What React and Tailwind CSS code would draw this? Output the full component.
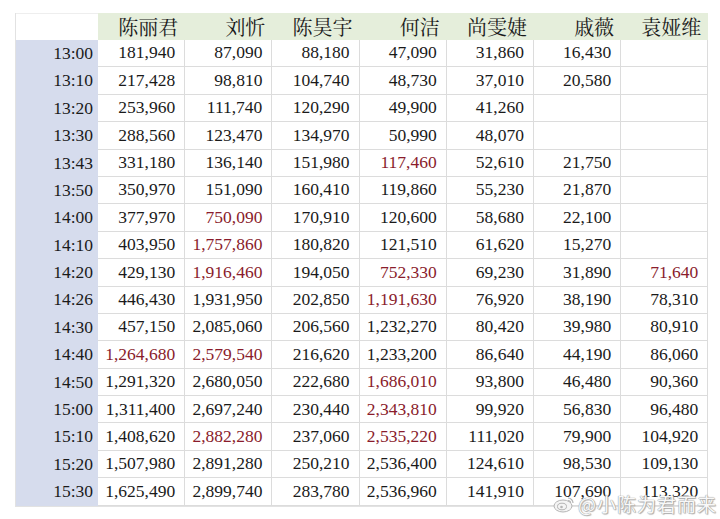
import React from 'react';

const names = ['陈丽君', '刘忻', '陈昊宇', '何洁', '尚雯婕', '戚薇', '袁娅维'];

// value prefixed with "!" is shown in red
const rows = [
  ['13:00', '181,940', '87,090', '88,180', '47,090', '31,860', '16,430', ''],
  ['13:10', '217,428', '98,810', '104,740', '48,730', '37,010', '20,580', ''],
  ['13:20', '253,960', '111,740', '120,290', '49,900', '41,260', '', ''],
  ['13:30', '288,560', '123,470', '134,970', '50,990', '48,070', '', ''],
  ['13:43', '331,180', '136,140', '151,980', '!117,460', '52,610', '21,750', ''],
  ['13:50', '350,970', '151,090', '160,410', '119,860', '55,230', '21,870', ''],
  ['14:00', '377,970', '!750,090', '170,910', '120,600', '58,680', '22,100', ''],
  ['14:10', '403,950', '!1,757,860', '180,820', '121,510', '61,620', '15,270', ''],
  ['14:20', '429,130', '!1,916,460', '194,050', '!752,330', '69,230', '31,890', '!71,640'],
  ['14:26', '446,430', '1,931,950', '202,850', '!1,191,630', '76,920', '38,190', '78,310'],
  ['14:30', '457,150', '2,085,060', '206,560', '1,232,270', '80,420', '39,980', '80,910'],
  ['14:40', '!1,264,680', '!2,579,540', '216,620', '1,233,200', '86,640', '44,190', '86,060'],
  ['14:50', '1,291,320', '2,680,050', '222,680', '!1,686,010', '93,800', '46,480', '90,360'],
  ['15:00', '1,311,400', '2,697,240', '230,440', '!2,343,810', '99,920', '56,830', '96,480'],
  ['15:10', '1,408,620', '!2,882,280', '237,060', '!2,535,220', '111,020', '79,900', '104,920'],
  ['15:20', '1,507,980', '2,891,280', '250,210', '2,536,400', '124,610', '98,530', '109,130'],
  ['15:30', '1,625,490', '2,899,740', '283,780', '2,536,960', '141,910', '107,690', '113,320'],
];

const cols = 'grid grid-cols-[82px_repeat(7,87.2px)]';

const App = () => {
  return (
    <div className="relative w-[720px] h-[519px] bg-white overflow-hidden font-['Liberation_Serif',serif] text-[#1a1a1a]">
      <div className="pt-[13px] pl-[15px]">
        <div className="w-[692px] border-l border-b border-[#e2e2e2]">
          {/* Header */}
          <div className={`${cols} h-[27px]`}>
            <div className="bg-white border-t border-[#eeeeee]"></div>
            {names.map((n) => (
              <div
                key={n}
                className="bg-[#e5eedb] flex items-center justify-end pr-[7px] text-[20px] font-['Noto_Serif_CJK_SC','Noto_Sans_CJK_SC',serif] leading-none"
              >
                {n}
              </div>
            ))}
          </div>
          {/* Body */}
          {rows.map((r) => (
            <div key={r[0]} className={`${cols} h-[27.4px]`}>
              <div className="bg-[#d6dced] flex items-center justify-end pr-[5px] text-[17.5px] leading-none">
                {r[0]}
              </div>
              {r.slice(1).map((v, i) => {
                const red = v.startsWith('!');
                return (
                  <div
                    key={i}
                    className={`bg-white border-r border-b border-[#dcdcdc] flex items-center justify-end pr-[9px] text-[17.5px] leading-none ${red ? 'text-[#8a1c2c]' : ''}`}
                  >
                    {red ? v.slice(1) : v}
                  </div>
                );
              })}
            </div>
          ))}
        </div>
      </div>

      {/* Weibo watermark */}
      <div className="absolute left-[553px] top-[494px] flex items-center gap-[3px] text-white">
        <svg width="22" height="18" viewBox="0 0 22 18">
          <ellipse cx="10" cy="11" rx="9" ry="6" fill="#f4f4f4" stroke="#b5b5b5" strokeWidth="1" />
          <ellipse cx="9" cy="11.5" rx="4.5" ry="3.3" fill="none" stroke="#b5b5b5" strokeWidth="1" />
          <circle cx="8.5" cy="12" r="1.3" fill="#b5b5b5" />
          <path d="M15 3 a5 5 0 0 1 5 5" fill="none" stroke="#b5b5b5" strokeWidth="1.2" />
          <path d="M15 5.5 a2.5 2.5 0 0 1 2.6 2.6" fill="none" stroke="#b5b5b5" strokeWidth="1.2" />
        </svg>
        <span
          className="text-[19px] leading-none tracking-[1px] font-['Noto_Sans_CJK_SC',sans-serif] text-[#f8f8f8]"
          style={{ textShadow: '0 0 1px #9a9a9a, 0 0 1px #9a9a9a, 1px 1px 1px #b0b0b0' }}
        >
          @小陈为君而来
        </span>
      </div>
    </div>
  );
};

export default App;
